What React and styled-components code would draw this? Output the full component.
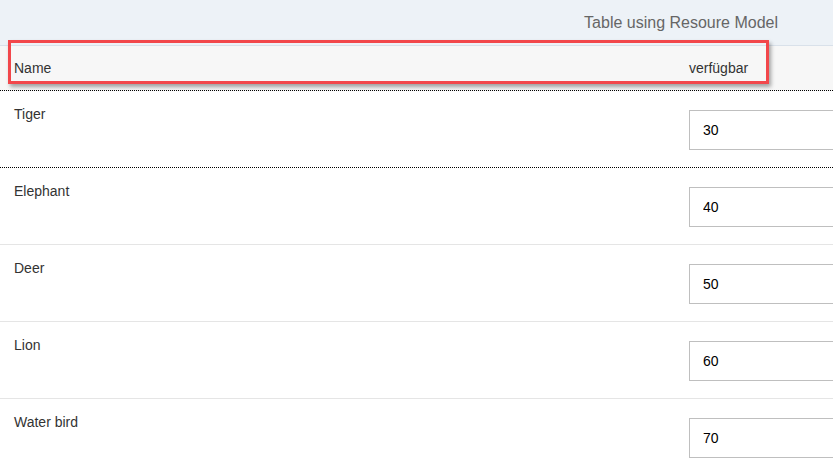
import React from "react";
import styled, { createGlobalStyle } from "styled-components";

const GlobalStyle = createGlobalStyle`
  html, body {
    margin: 0;
    overflow: hidden;
    background: #fff;
    font-family: "Liberation Sans", Arial, sans-serif;
  }
`;

const animals = [
  { name: "Tiger", count: 30, focused: true },
  { name: "Elephant", count: 40 },
  { name: "Deer", count: 50 },
  { name: "Lion", count: 60 },
  { name: "Water bird", count: 70 },
];

const Page = styled.div`
  position: relative;
  width: 833px;
  overflow: hidden;
`;

const TitleBar = styled.div`
  height: 45px;
  display: flex;
  align-items: center;
  justify-content: flex-end;
  padding-right: 55px;
  background: #edf2f7;
  border-bottom: 1px solid #d9e1ea;
  color: #666;
  font-size: 16px;
`;

const Grid = styled.div`
  display: grid;
  grid-template-columns: 689px 144px;
`;

const HeaderRow = styled(Grid)`
  height: 44px;
  align-items: center;
  background: #f7f7f7;
  border-bottom: 1px dotted #000;
  color: #333;
  font-size: 14px;
  & > span:first-child {
    padding-left: 14px;
  }
`;

const Row = styled(Grid)`
  height: 76px;
  border-bottom: 1px ${(p) => (p.focused ? "dotted #000" : "solid #e5e5e5")};
`;

const NameCell = styled.div`
  padding: 15px 0 0 14px;
  font-size: 14px;
  color: #333;
`;

const InputCell = styled.div`
  padding-top: 19px;
  overflow: hidden;
`;

const NumberInput = styled.input`
  box-sizing: border-box;
  width: 200px;
  height: 40px;
  padding: 0 13px;
  border: 1px solid #bfbfbf;
  border-radius: 0;
  font: 14px "Liberation Sans", Arial, sans-serif;
  color: #000;
  background: #fff;
  outline: none;
`;

const Highlight = styled.div`
  position: absolute;
  left: 8px;
  top: 40px;
  width: 761px;
  height: 44px;
  box-sizing: border-box;
  border: 3px solid #f2474b;
  box-shadow: 2px 3px 4px rgba(0, 0, 0, 0.35);
  pointer-events: none;
`;

export default function App() {
  return (
    <Page>
      <GlobalStyle />
      <TitleBar>Table using Resoure Model</TitleBar>
      <HeaderRow>
        <span>Name</span>
        <span>verfügbar</span>
      </HeaderRow>
      {animals.map((a) => (
        <Row key={a.name} focused={a.focused}>
          <NameCell>{a.name}</NameCell>
          <InputCell>
            <NumberInput defaultValue={a.count} />
          </InputCell>
        </Row>
      ))}
      <Highlight />
    </Page>
  );
}
